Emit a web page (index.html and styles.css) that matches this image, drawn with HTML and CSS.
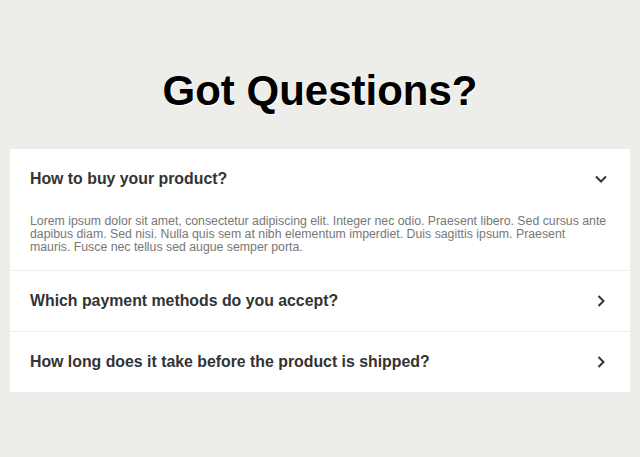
FILE: index.html
```html
<!DOCTYPE html>
<html lang="en">
<head>
<meta charset="utf-8">
<title>Got Questions?</title>
<link rel="stylesheet" href="styles.css">
</head>
<body>
<main class="page">
  <h1 class="title">Got Questions?</h1>
  <section class="faq">
    <div class="item open">
      <div class="question">
        <span>How to buy your product?</span>
        <svg class="chev" width="14" height="14" viewBox="0 0 14 14"><path d="M2 4.5 L7 9.5 L12 4.5" fill="none" stroke="#333" stroke-width="2"/></svg>
      </div>
      <p class="answer">Lorem ipsum dolor sit amet, consectetur adipiscing elit. Integer nec odio. Praesent libero. Sed cursus ante dapibus diam. Sed nisi. Nulla quis sem at nibh elementum imperdiet. Duis sagittis ipsum. Praesent mauris. Fusce nec tellus sed augue semper porta.</p>
    </div>
    <div class="item">
      <div class="question">
        <span>Which payment methods do you accept?</span>
        <svg class="chev" width="14" height="14" viewBox="0 0 14 14"><path d="M4.5 2 L9.5 7 L4.5 12" fill="none" stroke="#333" stroke-width="2"/></svg>
      </div>
    </div>
    <div class="item">
      <div class="question">
        <span>How long does it take before the product is shipped?</span>
        <svg class="chev" width="14" height="14" viewBox="0 0 14 14"><path d="M4.5 2 L9.5 7 L4.5 12" fill="none" stroke="#333" stroke-width="2"/></svg>
      </div>
    </div>
  </section>
</main>
</body>
</html>
```
FILE: styles.css
```css
html, body {
  margin: 0;
  padding: 0;
  background: #edeeea;
}
.page {
  padding: 67px 10px 0;
  font-family: "Liberation Sans", Arial, sans-serif;
}
.title {
  margin: 0 0 34px;
  text-align: center;
  font-size: 42px;
  line-height: 48px;
  font-weight: bold;
  color: #000;
  text-shadow: 1px 1px 0 #fff;
}
.faq {
  background: #fff;
}
.item + .item {
  border-top: 1px solid #eeeeee;
}
.question {
  display: flex;
  align-items: center;
  justify-content: space-between;
  padding: 20px 22px 20px 20px;
  height: 20px;
  font-size: 15.85px;
  font-weight: bold;
  color: #333;
}
.chev {
  display: block;
}
.answer {
  margin: 0;
  padding: 6px 23px 16px 20px;
  font-size: 12.3px;
  line-height: 13px;
  color: #777;
}
```
